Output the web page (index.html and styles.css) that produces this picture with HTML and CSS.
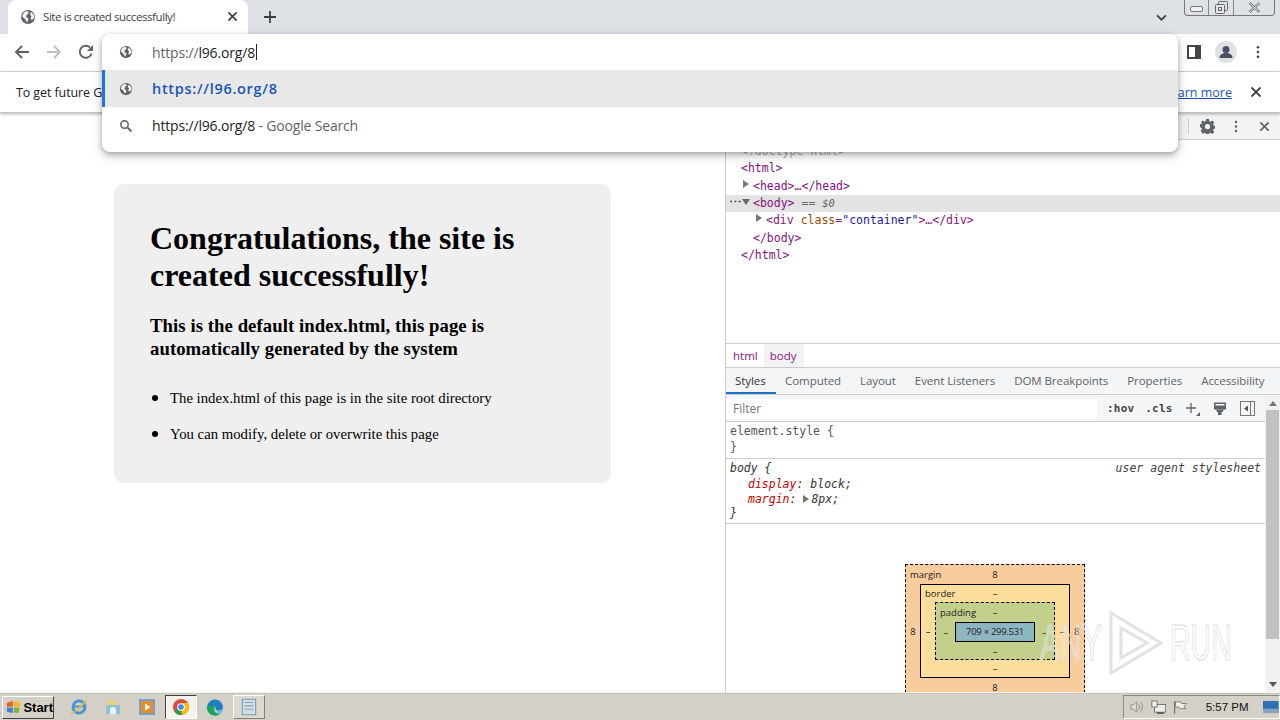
FILE: index.html
```html
<!DOCTYPE html>
<html lang="en">
<head>
<meta charset="utf-8">
<title>Site is created successfully!</title>
<link rel="stylesheet" href="styles.css">
</head>
<body>
<svg class="defs" width="0" height="0" aria-hidden="true">
  <symbol id="globe" viewBox="0 0 16 16"><circle cx="8" cy="8" r="7" fill="#5f6368"/><path d="M3 4.500l3-2.500 2 .5 1 1.500-2 1.500-1 2.500 2 1 .5 1.500L7 13.500 5 10 2 7.500z M11 3l2.500 2 1 3.500-2.500 2.500-1.500-1.500 1-2-1.500-2z" fill="#fff" opacity=".92"/></symbol>
  <symbol id="x" viewBox="0 0 12 12"><path d="M1.500 1.500l9 9M10.500 1.500l-9 9" stroke="currentColor" stroke-width="1.800" fill="none"/></symbol>
  <symbol id="kebab" viewBox="0 0 4 16"><circle cx="2" cy="2.500" r="1.500" fill="currentColor"/><circle cx="2" cy="8" r="1.500" fill="currentColor"/><circle cx="2" cy="13.500" r="1.500" fill="currentColor"/></symbol>
</svg>

<div class="browser">
  <header class="tabstrip">
    <div class="tab">
      <svg class="tab-globe"><use href="#globe"/></svg>
      <span class="tab-title">Site is created successfully!</span>
      <svg class="tab-x"><use href="#x"/></svg>
    </div>
    <svg class="plus" viewBox="0 0 12 12"><path d="M6 0v12M0 6h12" stroke="#3c4043" stroke-width="1.800"/></svg>
    <svg class="chevron" viewBox="0 0 10 6"><path d="M1 1l4 4 4-4" stroke="#3c4043" stroke-width="1.600" fill="none"/></svg>
    <div class="winctl">
      <span class="win-btn win-min"><svg viewBox="0 0 13 7" width="13" height="7"><rect x=".5" y=".5" width="12" height="5" rx="1.500" fill="#eef0f3" stroke="#777"/></svg></span>
      <span class="win-btn win-res"><svg viewBox="0 0 13 13" width="13" height="13"><rect x="3.500" y=".5" width="9" height="9" rx="1" fill="none" stroke="#666"/><rect x=".5" y="3.500" width="9" height="9" rx="1" fill="#e4e6ea" stroke="#666"/><rect x="3.500" y="6.500" width="3" height="3" fill="none" stroke="#666"/></svg></span>
      <span class="win-btn win-close"><svg viewBox="0 0 13 11" width="13" height="11"><path d="M1.500 1l10 9M11.500 1l-10 9" stroke="#777" stroke-width="2.400"/><path d="M1.500 1l10 9M11.500 1l-10 9" stroke="#eef0f3" stroke-width="1"/></svg></span>
    </div>
  </header>

  <nav class="toolbar">
    <svg class="nav-ic" viewBox="0 0 16 16"><path d="M15 8H2.500M8 2L2 8l6 6" stroke="#5f6368" stroke-width="1.900" fill="none"/></svg>
    <svg class="nav-ic" viewBox="0 0 16 16"><path d="M1 8h12.500M8 2l6 6-6 6" stroke="#bcbfc3" stroke-width="1.900" fill="none"/></svg>
    <svg class="nav-ic" viewBox="0 0 16 16"><path d="M13.500 9.500A6 6 0 1 1 12 3.500" stroke="#5f6368" stroke-width="1.900" fill="none"/><path d="M15 1v6H9z" fill="#5f6368"/></svg>
    <div class="spacer"></div>
    <svg class="panel-ic" viewBox="0 0 14 14"><rect x="1" y="1" width="12" height="12" fill="#fff" stroke="#444" stroke-width="2"/><rect x="8" y="1" width="5" height="12" fill="#444"/></svg>
    <svg class="avatar" viewBox="0 0 22 22"><circle cx="11" cy="11" r="11" fill="#dfe1e6"/><circle cx="11" cy="8.500" r="3.500" fill="#4a4f63"/><path d="M4.500 17c0-3.500 3-5 6.500-5s6.500 1.500 6.500 5z" fill="#4a4f63"/></svg>
    <svg class="kebab"><use href="#kebab"/></svg>
  </nav>

  <div class="infobar">
    <span class="info-text">To get future Google Chrome updates, you'll need Windows 10 or later.</span>
    <a class="learn">Learn more</a>
    <svg class="info-x"><use href="#x"/></svg>
  </div>

  <main class="content">
    <section class="page">
      <div class="card">
        <h1>Congratulations, the site is created successfully!</h1>
        <h2>This is the default index.html, this page is automatically generated by the system</h2>
        <ul>
          <li>The index.html of this page is in the site root directory</li>
          <li>You can modify, delete or overwrite this page</li>
        </ul>
      </div>
    </section>

    <aside class="devtools">
      <div class="dt-toolbar">
        <span class="dt-divider"></span>
        <svg class="gear" viewBox="0 0 16 16"><path fill="#5f6368" fill-rule="evenodd" d="M6.500 0h3l.4 2.200 1.300.6L13.100 1.500l2.100 2.100-1.300 1.900.6 1.300 2.100.5v3l-2.100.4-.6 1.300 1.300 1.900-2.100 2.100-1.900-1.300-1.300.6-.4 2.100h-3l-.4-2.100-1.300-.6-1.900 1.300L.8 12.400l1.300-1.900-.6-1.300L-.6 8.800v-3l2.100-.4.6-1.300L.8 3.600 2.900 1.500l1.900 1.300 1.300-.6zM8 5.200a2.800 2.800 0 1 0 0 5.600 2.800 2.800 0 0 0 0-5.600z"/></svg>
        <svg class="dt-kebab"><use href="#kebab"/></svg>
        <svg class="dt-x"><use href="#x"/></svg>
      </div>

      <div class="dom">
        <div class="dom-line ind1 faded">&lt;!doctype html&gt;</div>
        <div class="dom-line ind1"><span class="tag">&lt;html&gt;</span></div>
        <div class="dom-line ind2"><i class="tri-r"></i><span class="tag">&lt;head&gt;…&lt;/head&gt;</span></div>
        <div class="dom-line ind2 sel"><span class="dots">•••</span><i class="tri-d"></i><span class="tag">&lt;body&gt;</span> <span class="eq">== <em>$0</em></span></div>
        <div class="dom-line ind3"><i class="tri-r"></i><span class="tag">&lt;div</span> <span class="attr">class</span><span class="tag">=</span><span class="val">"container"</span><span class="tag">&gt;…&lt;/div&gt;</span></div>
        <div class="dom-line ind2"><span class="tag">&lt;/body&gt;</span></div>
        <div class="dom-line ind1"><span class="tag">&lt;/html&gt;</span></div>
      </div>

      <div class="crumbs">
        <span class="crumb">html</span>
        <span class="crumb crumb-on">body</span>
      </div>

      <div class="tabs">
        <span class="dtab dtab-on">Styles</span>
        <span class="dtab">Computed</span>
        <span class="dtab">Layout</span>
        <span class="dtab">Event Listeners</span>
        <span class="dtab">DOM Breakpoints</span>
        <span class="dtab">Properties</span>
        <span class="dtab">Accessibility</span>
      </div>

      <div class="styles-wrap">
        <div class="styles-main">
          <div class="filter-row">
            <div class="filter">Filter</div>
            <span class="tool-txt">:hov</span>
            <span class="tool-txt">.cls</span>
            <span class="add"><svg viewBox="0 0 16 14" width="16" height="14"><path d="M6 1v10M1 6h10" stroke="#5f6368" stroke-width="1.300"/><path d="M15 10v4h-4z" fill="#5f6368"/></svg></span>
            <svg class="brush" viewBox="0 0 14 15" width="14" height="15"><path d="M1 1.500h12v7H1z" fill="#5f6368"/><path d="M2.500 3h9v1.500h-9z" fill="#fff"/><path d="M3 8.500h8l-1.500 2.500h-1v3h-3.500v-3h-1z" fill="#5f6368"/></svg>
            <svg class="side" viewBox="0 0 15 15" width="15" height="15"><rect x=".5" y=".5" width="14" height="14" fill="none" stroke="#777"/><path d="M10.500 1v13" stroke="#777"/><path d="M8 4.500v6l-4-3z" fill="#555"/></svg>
          </div>

          <div class="rule">
            <div class="rl sel-name">element.style {</div>
            <div class="rl sel-name">}</div>
          </div>
          <div class="rule rule-ua">
            <div class="rl rl-first"><span>body {</span><span class="ua">user agent stylesheet</span></div>
            <div class="rl decl"><span class="prop">display</span>: block;</div>
            <div class="rl decl"><span class="prop">margin</span>: <i class="tri-r tri-sm"></i>8px;</div>
            <div class="rl">}</div>
          </div>

          <div class="boxmodel">
            <div class="bx bx-margin">
              <span class="bx-label">margin</span>
              <span class="v-top">8</span>
              <span class="v-left">8</span>
              <div class="bx bx-border">
                <span class="bx-label">border</span>
                <span class="v-top">–</span>
                <span class="v-left">–</span>
                <div class="bx bx-padding">
                  <span class="bx-label">padding</span>
                  <span class="v-top">–</span>
                  <span class="v-left">–</span>
                  <div class="bx-content">709 × 299.531</div>
                  <span class="v-right">–</span>
                  <span class="v-bottom">–</span>
                </div>
                <span class="v-right">–</span>
                <span class="v-bottom">–</span>
              </div>
              <span class="v-right">8</span>
              <span class="v-bottom">8</span>
            </div>
          </div>
        </div>
        <div class="scrollbar">
          <i class="sb-up"></i>
          <div class="sb-thumb"></div>
          <i class="sb-down"></i>
        </div>
      </div>
    </aside>

    <div class="watermark">
      <span class="wm-any">ANY</span>
      <svg viewBox="0 0 60 66" width="60" height="66"><path d="M6 3l50 30L6 63z M16 18v30l26-15z" fill="none" stroke="#e2e2e2" stroke-width="3"/></svg>
      <span class="wm-run">RUN</span>
    </div>
  </main>

  <div class="omnibox">
    <div class="omni-row omni-input">
      <svg class="omni-ic"><use href="#globe"/></svg>
      <span class="omni-text"><span class="dim">https://</span>l96.org/8</span><i class="caret"></i>
    </div>
    <div class="omni-row omni-sel">
      <svg class="omni-ic"><use href="#globe"/></svg>
      <span class="omni-link">https://l96.org/8</span>
    </div>
    <div class="omni-row">
      <svg class="omni-ic" viewBox="0 0 14 14"><circle cx="5.500" cy="5.500" r="3.700" fill="none" stroke="#5f6368" stroke-width="1.500"/><path d="M8.500 8.500l4 4" stroke="#5f6368" stroke-width="1.800"/></svg>
      <span class="omni-text">https://l96.org/8<span class="dim"> - Google Search</span></span>
    </div>
  </div>
</div>

<footer class="taskbar">
  <button class="start">
    <svg viewBox="0 0 18 16" width="18" height="16"><path d="M1 3l7-2v6.500l-7 .5z" fill="#e2622a"/><path d="M9 1l8 1-1 6-7-.5z" fill="#f2b630"/><path d="M1 9l7-.5V15l-7-1.500z" fill="#3f80d8"/><path d="M9 8.500l7 .5-1 6-6-.5z" fill="#7db43c"/></svg>
    <span>Start</span>
  </button>
  <div class="task-icons">
    <span class="task"><svg viewBox="0 0 18 18" width="18" height="18"><circle cx="9" cy="9" r="6" fill="none" stroke="#4d94d6" stroke-width="3"/><path d="M4 8.500h11" stroke="#4d94d6" stroke-width="2"/><path d="M1 16c3-1 12-9 15-14" stroke="#e0b93a" stroke-width="1.500" fill="none"/></svg></span>
    <span class="task"><svg viewBox="0 0 18 18" width="18" height="18"><path d="M3 4l2-2h5l1 2h4v3H3z" fill="#e9cf80"/><path d="M2 7h14v9H2z" fill="#8dbfd9"/><path d="M6 16v-4a3 3 0 0 1 6 0v4z" fill="#e9f3f8"/></svg></span>
    <span class="task"><svg viewBox="0 0 18 18" width="18" height="18"><rect x="1" y="1" width="16" height="16" fill="#6fa3c9"/><rect x="3" y="3" width="12" height="12" fill="#e98a25"/><path d="M7 5.500v7l5.500-3.500z" fill="#fff"/></svg></span>
    <span class="task task-on"><svg viewBox="0 0 18 18" width="18" height="18"><circle cx="9" cy="9" r="8" fill="#dd4b3e"/><path d="M9 9L2 13a8 8 0 0 0 8 4z" fill="#2f9e4f"/><path d="M9 9l1 8a8 8 0 0 0 6-12H9z" fill="#f4c20d"/><circle cx="9" cy="9" r="3.800" fill="#fff"/><circle cx="9" cy="9" r="2.800" fill="#4285f4"/></svg></span>
    <span class="task"><svg viewBox="0 0 18 18" width="18" height="18"><path d="M1 10a8 8 0 0 1 16-1c0 3-3 3.500-5 3.500-3 0-3-2-2-3-2-1.500-6-1-9 .5z" fill="#1f7fc4"/><path d="M1 10c1-2 5-3 8-1.500-2 3 0 7.500 5 7.500-2 1.500-4 2-6 1.500C4 17 1 14 1 10z" fill="#17a45e"/><path d="M12 12.500c2 0 5-.5 5-3.500 0 3-1 5-3 7-2.500 0-4-2-2-3.500z" fill="#55c1e8"/></svg></span>
    <span class="task task-note"><svg viewBox="0 0 18 18" width="20" height="20"><path d="M3 2h12v14H3z" fill="#cfe1e8" stroke="#7d9aa8"/><path d="M5 5h8M5 8h8M5 11h8" stroke="#8aa5b2"/></svg></span>
  </div>
  <div class="task-space"></div>
  <div class="tray">
    <svg viewBox="0 0 18 16" width="18" height="16"><path d="M2 5.500h3L9 2v12l-4-3.500H2z" fill="#dcdcd6" stroke="#8b8b85"/><path d="M11 5a4 4 0 0 1 0 6M13.500 3a7 7 0 0 1 0 10" stroke="#8b8b85" fill="none"/></svg>
    <svg viewBox="0 0 18 16" width="18" height="16"><rect x="4" y="5" width="13" height="9" fill="#ecece8" stroke="#666"/><rect x="1" y="1" width="6" height="7" fill="#f2f2ee" stroke="#666"/><path d="M7 15h8" stroke="#555" stroke-width="2"/></svg>
    <svg viewBox="0 0 18 16" width="18" height="16"><path d="M3 1v15" stroke="#777" stroke-width="1.500"/><path d="M4 2h6l1 2h6l-3 3 2 3H9L8 8H4z" fill="#eeeeea" stroke="#777"/></svg>
    <span class="clock">5:57 PM</span>
    <svg class="desk" viewBox="0 0 18 14" width="18" height="14"><rect width="18" height="14" fill="#2f6fb8"/><rect y="9" width="18" height="5" fill="#8aa3c0"/></svg>
  </div>
</footer>
</body>
</html>
```

FILE: styles.css
```css
* { box-sizing: border-box; }
html, body { margin: 0; height: 720px; overflow: hidden; }
body { display: flex; flex-direction: column; background: #fff; font-family: "Open Sans", "Liberation Sans", sans-serif; color: #202124; }
.defs { position: absolute; }
.browser { height: 692px; display: flex; flex-direction: column; position: relative; }

/* tab strip */
.tabstrip { height: 34px; flex: none; background: #dee1e6; display: flex; align-items: center; padding-left: 8px; }
.tab { width: 240px; height: 34px; background: #fff; border-radius: 8px 8px 0 0; display: flex; align-items: center; padding: 0 10px 1px 12px; }
.tab-globe { width: 16px; height: 16px; flex: none; }
.tab-title { font-size: 11.500px; margin-left: 7px; flex: 1; white-space: nowrap; letter-spacing: -.42px; color: #3c4043; }
.tab-x { width: 11px; height: 11px; color: #3c4043; }
.plus { width: 12px; height: 12px; margin-left: 16px; }
.chevron { width: 11px; height: 7px; margin-left: auto; }
.winctl { display: flex; height: 16px; margin: 0 5px 18px 17px; border: 1px solid #777; border-top: 0; border-radius: 0 0 4px 4px; }
.win-btn { display: flex; align-items: center; justify-content: center; }
.win-min { width: 24px; padding-top: 4px; border-right: 1px solid #888; }
.win-res { width: 25px; border-right: 1px solid #888; }
.win-close { width: 40px; }

/* toolbar */
.toolbar { height: 38px; flex: none; background: #fff; border-bottom: 1px solid #dadce0; display: flex; align-items: center; padding: 0 0 1px 14px; }
.nav-ic { width: 16px; height: 16px; margin-right: 16px; }
.spacer { flex: 1; }
.panel-ic { width: 14px; height: 14px; margin-right: 14px; }
.avatar { width: 22px; height: 22px; margin-right: 19px; }
.kebab { width: 4px; height: 14px; margin-right: 20px; color: #444; }

/* omnibox dropdown, lying over the toolbar and page */
.omnibox { position: absolute; left: 102px; top: 34px; width: 1076px; height: 118px; background: #fff; border-radius: 8px; box-shadow: 0 2px 5px rgba(0,0,0,.25), 0 4px 12px rgba(0,0,0,.18); z-index: 5; }
.omni-row { height: 37px; display: flex; align-items: center; padding-left: 17px; font-size: 14px; white-space: nowrap; }
.omni-input { height: 36px; }
.omni-sel { background: #e8e8e8; box-shadow: inset 3px 0 0 #1a73e8; }
.omni-ic { width: 14px; height: 14px; flex: none; margin-right: 19px; }
.omni-text { letter-spacing: -.17px; color: #202124; }
.dim { color: #5f6368; }
.caret { width: 1px; height: 16px; background: #222; margin-left: 1px; }
.omni-link { color: #1a56b8; font-weight: 600; font-size: 14.500px; letter-spacing: .7px; }

/* info bar */
.infobar { height: 41px; flex: none; background: #fff; border-bottom: 1px solid #c4c4c4; box-shadow: 0 1px 3px rgba(0,0,0,.3); display: flex; align-items: center; padding: 0 18px 0 16px; font-size: 12.500px; position: relative; z-index: 1; }
.info-text { flex: 1; white-space: nowrap; letter-spacing: -.1px; }
.learn { color: #1a56b8; text-decoration: underline; margin-right: 18px; white-space: nowrap; }
.info-x { width: 12px; height: 12px; color: #444; }

/* main */
.content { flex: 1; display: flex; min-height: 0; position: relative; }
.page { width: 726px; flex: none; border-right: 1px solid #ccc; padding: 71px 114px 0 114px; }
.card { background: #efefef; border-radius: 10px; height: 299px; padding: 36px; font-family: "Liberation Serif", "Times New Roman", serif; color: #000; }
h1 { font-size: 32px; line-height: 37px; margin: 0; }
h2 { font-size: 18.720px; line-height: 23px; margin: 20px 0 0; letter-spacing: .07px; }
ul { margin: 28px 0 0; padding-left: 20px; font-size: 14.750px; line-height: 18px; }
li { margin-bottom: 17px; }
li::marker { font-size: 19px; }

/* devtools */
.devtools { flex: 1; min-width: 0; display: flex; flex-direction: column; font-size: 12px; overflow: hidden; }
.dt-toolbar { height: 27px; flex: none; background: #f3f3f3; border-bottom: 1px solid #ccc; display: flex; align-items: center; justify-content: flex-end; padding-right: 10px; }
.dt-divider { width: 1px; height: 16px; background: #ccc; margin-right: 11px; }
.gear { width: 15px; height: 15px; margin-right: 19px; }
.dt-kebab { width: 4px; height: 13px; margin-right: 21px; color: #5f6368; }
.dt-x { width: 11px; height: 11px; color: #5f6368; }

.dom { height: 203px; flex: none; font-family: "DejaVu Sans Mono", "Liberation Mono", monospace; font-size: 11.500px; padding-top: 3px; }
.dom-line { height: 17.350px; line-height: 17.350px; white-space: pre; position: relative; }
.ind1 { padding-left: 15px; }
.ind2 { padding-left: 27px; }
.ind3 { padding-left: 40px; }
.faded { color: #aaa; }
.sel { background: #e3e3e3; }
.tag { color: #881280; }
.attr { color: #994500; }
.val { color: #1a1aa6; }
.eq { color: #666; }
.eq em { font-size: 10.500px; }
.dots { position: absolute; left: 3px; top: -1px; font-size: 7px; color: #555; letter-spacing: 0; }
.tri-r, .tri-d { position: absolute; width: 0; height: 0; border-style: solid; border-color: transparent; }
.tri-r { border-width: 4px 0 4px 6px; border-left-color: #777; margin: 2px 0 0 -10px; }
.tri-d { border-width: 6px 4px 0 4px; border-top-color: #666; margin: 4px 0 0 -11px; }
.tri-sm { position: static; display: inline-block; border-width: 4px 0 4px 6px; margin: 0 2px 0 0; }

.crumbs { height: 25px; flex: none; border-top: 1px solid #ccc; border-bottom: 1px solid #ccc; display: flex; color: #881280; line-height: 23px; font-size: 11.500px; }
.crumb { padding: 0 7px; }
.crumb-on { background: #f1f3f4; margin-left: -1px; padding: 0 6px; width: 40px; }

.tabs { height: 27px; flex: none; background: #f3f5f6; border-bottom: 1px solid #ccc; display: flex; line-height: 26px; color: #5f6368; white-space: nowrap; font-size: 11.500px; letter-spacing: -.07px; }
.dtab { padding: 0 9.500px; }
.dtab-on { color: #333; box-shadow: inset 0 -2px 0 #1a73c8; padding: 0 10px 0 9px; }

.styles-wrap { flex: 1; min-height: 0; display: flex; overflow: hidden; }
.styles-main { flex: 1; min-width: 0; overflow: hidden; }
.filter-row { height: 27px; background: #f3f5f6; border-bottom: 1px solid #ccc; display: flex; align-items: center; padding-top: 1px; color: #444; font-family: "DejaVu Sans Mono", monospace; font-size: 11px; font-weight: 700; }
.filter { width: 371px; height: 20px; background: #fff; padding-left: 7px; line-height: 20px; color: #757575; font-family: "Open Sans", sans-serif; font-size: 12px; font-weight: 400; margin-right: 10px; }
.tool-txt { margin-right: 11px; letter-spacing: .2px; }
.add { margin: 0 6px 0 1px; height: 14px; }
.brush { margin-right: 13px; margin-left: 6px; }

.rule { padding: 2px 4px 3px; border-bottom: 1px solid #ccc; font-family: "DejaVu Sans Mono", monospace; font-size: 11.500px; }
.rl { height: 15.500px; line-height: 15.500px; white-space: nowrap; }
.sel-name { color: #555; }
.rule-ua { height: 65px; padding-top: 1px; font-style: italic; color: #333; }
.rule-ua .rl { height: 14.500px; line-height: 14.500px; display: flex; justify-content: space-between; }
.rule-ua .rl-first { height: 17px; line-height: 16px; }
.rule-ua .decl { display: block; padding-left: 18px; }
.ua { color: #444; }
.prop { color: #c80000; }

.boxmodel { display: flex; justify-content: center; padding-top: 40px; color: #222; font-family: "Open Sans", sans-serif; font-size: 9.500px; }
.bx { display: grid; position: relative; text-align: center; }
.bx-margin { background: #f9cc9d; border: 1px dashed #000; width: 180px; margin-right: 1px; grid-template-columns: 14px 150px 14px; grid-template-rows: 19px auto 19px; line-height: 19px; }
.bx-border { background: #fddd9b; border: 1px solid #000; grid-column: 2; grid-row: 2; grid-template-columns: 14px 120px 14px; grid-template-rows: 17px auto 17px; line-height: 17px; }
.bx-padding { background: #c3d08b; border: 1px dashed #000; grid-column: 2; grid-row: 2; grid-template-columns: 19px 80px 19px; grid-template-rows: 19px auto 17px; line-height: 19px; }
.bx-content { background: #8cb6c0; border: 1px solid #000; grid-column: 2; grid-row: 2; height: 20px; line-height: 18px; letter-spacing: -.3px; white-space: nowrap; }
.bx-label { position: absolute; left: 4px; top: 0; }
.v-top { grid-column: 1 / 4; grid-row: 1; }
.v-left { grid-column: 1; grid-row: 2; align-self: center; }
.v-right { grid-column: 3; grid-row: 2; align-self: center; }
.v-bottom { grid-column: 1 / 4; grid-row: 3; }

.scrollbar { width: 15px; flex: none; background: #f1f1f1; display: flex; flex-direction: column; align-items: center; padding-top: 6px; }
.sb-up { width: 0; height: 0; border: 4px solid transparent; border-top: 0; border-bottom: 5px solid #777; }
.sb-thumb { width: 13px; height: 229px; background: #c1c1c1; margin: 4px 0 auto; }
.sb-down { width: 0; height: 0; border: 4px solid transparent; border-bottom: 0; border-top: 5px solid #555; margin-bottom: 5px; }

.watermark { position: absolute; left: 1040px; top: 497px; display: flex; align-items: center; gap: 5px; font-family: "Liberation Sans", sans-serif; font-size: 50px; line-height: 50px; color: rgba(255,255,255,.25); -webkit-text-stroke: 1px #dcdcdc; pointer-events: none; white-space: nowrap; }
.wm-any, .wm-run { display: block; width: 60px; transform-origin: left center; }
.wm-any { transform: scaleX(.6); }
.wm-run { transform: scaleX(.57); }

/* taskbar */
.taskbar { height: 28px; flex: none; background: #d4d0c8; border-top: 1px solid #f4f2ee; box-shadow: inset 0 1px 0 #c8c4bc; display: flex; align-items: center; padding: 1px 0 0 2px; }
.start { width: 52px; height: 23px; padding: 0 0 0 3px; display: flex; align-items: center; gap: 2px; background: #d4d0c8; border: 1px solid; border-color: #fff #404040 #404040 #fff; font: 700 13px "Liberation Sans", sans-serif; color: #000; }
.task-icons { display: flex; margin-left: 8px; }
.task { width: 34px; height: 24px; display: flex; align-items: center; justify-content: center; }
.task-on { background: #f4f2ee; border: 1px solid; border-color: #404040 #fff #fff #404040; width: 32px; margin: 0 1px; }
.task-note { background: #dcd9d2; border: 1px solid; border-color: #fff #808080 #808080 #fff; width: 32px; margin: 0 1px; }
.task-space { flex: 1; }
.tray { width: 157px; height: 24px; border: 1px solid; border-color: #8c8a84 #fff #fff #8c8a84; display: flex; align-items: center; padding-left: 5px; gap: 6px; }
.clock { font-size: 11.500px; font-family: "Liberation Sans", sans-serif; margin-left: 12px; color: #111; white-space: nowrap; }
.desk { margin-left: 9px; }
```
